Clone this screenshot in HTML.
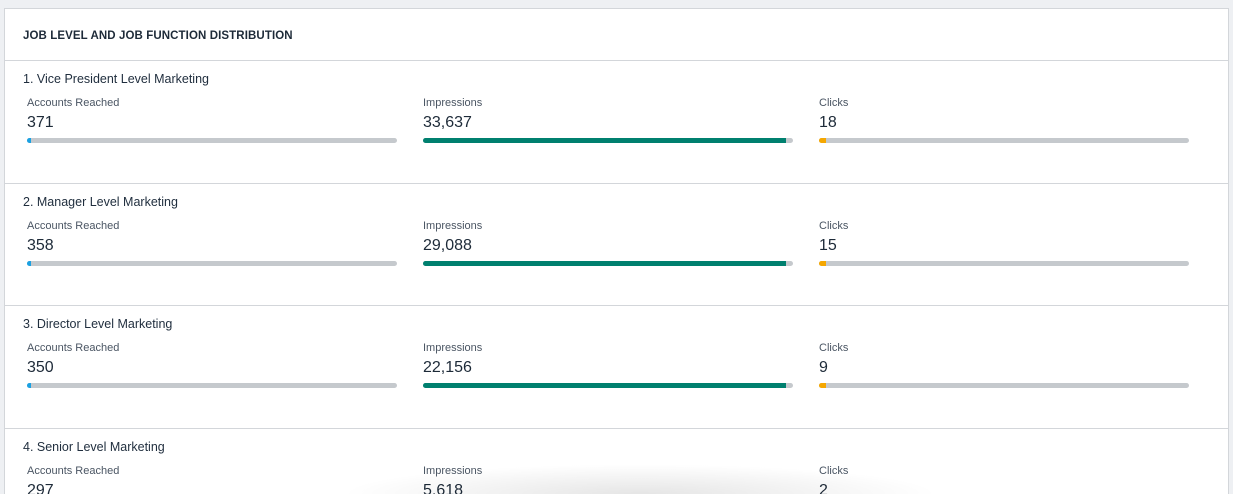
<!DOCTYPE html>
<html style="width:1233px;height:494px;overflow:hidden"><head><style>
body{margin:0;width:1233px;height:494px;overflow:hidden;background:#eef0f3;font-family:"Liberation Sans",sans-serif;color:#1f2d3d;position:relative}
.card{position:absolute;left:4px;top:8px;width:1223px;height:485px;background:#fff;border:1px solid #d3d6da;border-bottom:none;overflow:hidden}
.hdr{font-size:11.5px;font-weight:bold;letter-spacing:0.1px;line-height:55px;padding-left:18px;color:#1d2a38;box-sizing:border-box;height:52px;border-bottom:1px solid #d3d6da}
.row{height:122.7px;border-bottom:1px solid #d3d6da;position:relative;box-sizing:border-box}
.t{position:absolute;left:18px;top:11px;font-size:12.5px}
.c{position:absolute;top:36px;width:370px}
.l{font-size:11px;color:#4a5563}
.v{font-size:16px;margin-top:5px;color:#1d2a38}
.b{position:absolute;top:41px;left:0;width:370px;height:5px;background:#c5c9cd;border-radius:3px;overflow:hidden}
.b i{display:block;height:5px}
.sh{position:absolute;left:340px;top:464px;width:600px;height:30px;background:radial-gradient(ellipse at 50% 100%,rgba(0,0,0,0.10),rgba(0,0,0,0) 70%)}
</style></head><body>
<div class="card">
<div class="hdr">JOB LEVEL AND JOB FUNCTION DISTRIBUTION</div>
<div class="row"><div class="t">1. Vice President Level Marketing</div>
<div class="c" style="left:22px"><div class="l">Accounts Reached</div><div class="v">371</div><div class="b"><i style="width:4px;background:#1ba1e2"></i></div></div>
<div class="c" style="left:418px"><div class="l">Impressions</div><div class="v">33,637</div><div class="b"><i style="width:363px;background:#00806f"></i></div></div>
<div class="c" style="left:814px"><div class="l">Clicks</div><div class="v">18</div><div class="b"><i style="width:7px;background:#f5a700"></i></div></div></div>
<div class="row"><div class="t">2. Manager Level Marketing</div>
<div class="c" style="left:22px"><div class="l">Accounts Reached</div><div class="v">358</div><div class="b"><i style="width:4px;background:#1ba1e2"></i></div></div>
<div class="c" style="left:418px"><div class="l">Impressions</div><div class="v">29,088</div><div class="b"><i style="width:363px;background:#00806f"></i></div></div>
<div class="c" style="left:814px"><div class="l">Clicks</div><div class="v">15</div><div class="b"><i style="width:7px;background:#f5a700"></i></div></div></div>
<div class="row"><div class="t">3. Director Level Marketing</div>
<div class="c" style="left:22px"><div class="l">Accounts Reached</div><div class="v">350</div><div class="b"><i style="width:4px;background:#1ba1e2"></i></div></div>
<div class="c" style="left:418px"><div class="l">Impressions</div><div class="v">22,156</div><div class="b"><i style="width:363px;background:#00806f"></i></div></div>
<div class="c" style="left:814px"><div class="l">Clicks</div><div class="v">9</div><div class="b"><i style="width:7px;background:#f5a700"></i></div></div></div>
<div class="row" style="border:none;height:60px"><div class="t">4. Senior Level Marketing</div>
<div class="c" style="left:22px"><div class="l">Accounts Reached</div><div class="v">297</div></div>
<div class="c" style="left:418px"><div class="l">Impressions</div><div class="v">5,618</div></div>
<div class="c" style="left:814px"><div class="l">Clicks</div><div class="v">2</div></div></div>
</div>
<div class="sh"></div>
</body></html>
